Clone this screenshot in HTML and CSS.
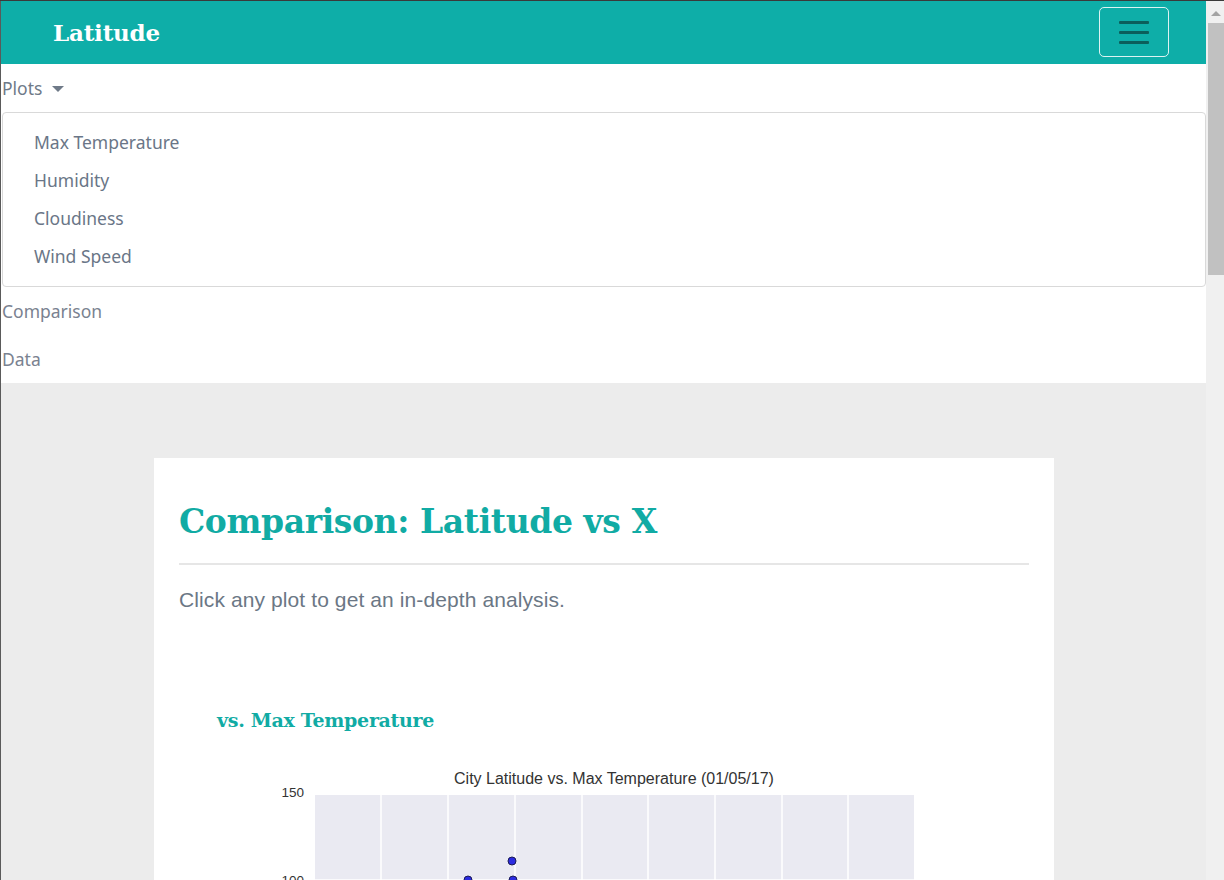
FILE: index.html
```html
<!DOCTYPE html>
<html lang="en">
<head>
<meta charset="utf-8">
<title>Latitude - Comparison</title>
<link rel="stylesheet" href="styles.css">
</head>
<body>
<div class="window">
  <div class="page">
    <nav class="navbar">
      <a class="brand" href="#">Latitude</a>
      <button class="toggler" type="button" aria-label="Toggle navigation">
        <span class="bar"></span><span class="bar"></span><span class="bar"></span>
      </button>
    </nav>
    <div class="menu">
      <div class="menu-row dropdown-toggle">Plots <span class="caret"></span></div>
      <div class="dropdown">
        <a class="dropdown-item" href="#">Max Temperature</a>
        <a class="dropdown-item" href="#">Humidity</a>
        <a class="dropdown-item" href="#">Cloudiness</a>
        <a class="dropdown-item" href="#">Wind Speed</a>
      </div>
      <div class="menu-row">Comparison</div>
      <div class="menu-row">Data</div>
    </div>
    <main class="content">
      <section class="card">
        <h1 class="title">Comparison: Latitude vs X</h1>
        <hr class="rule">
        <p class="lead">Click any plot to get an in-depth analysis.</p>
        <div class="plot">
          <h3 class="plot-title">vs. Max Temperature</h3>
          <svg class="chart" width="700" height="260" viewBox="0 0 700 260">
            <text x="354" y="19" class="ctitle" text-anchor="middle">City Latitude vs. Max Temperature (01/05/17)</text>
            <rect x="55" y="30" width="599" height="230" fill="#eaeaf2"/>
            <g stroke="#ffffff" stroke-width="1.5">
              <line x1="121" y1="30" x2="121" y2="260"/>
              <line x1="188" y1="30" x2="188" y2="260"/>
              <line x1="255" y1="30" x2="255" y2="260"/>
              <line x1="322" y1="30" x2="322" y2="260"/>
              <line x1="388" y1="30" x2="388" y2="260"/>
              <line x1="455" y1="30" x2="455" y2="260"/>
              <line x1="522" y1="30" x2="522" y2="260"/>
              <line x1="588" y1="30" x2="588" y2="260"/>
              <line x1="55" y1="115" x2="654" y2="115"/>
            </g>
            <text x="44" y="32" class="ctick" text-anchor="end">150</text>
            <text x="44" y="120" class="ctick" text-anchor="end">100</text>
            <g fill="#2b2be0" stroke="#1b1b55" stroke-width="1">
              <circle cx="252" cy="96" r="4"/>
              <circle cx="208" cy="115" r="4"/>
              <circle cx="253" cy="115" r="4"/>
              <circle cx="230" cy="128" r="4"/>
            </g>
          </svg>
        </div>
      </section>
    </main>
  </div>
  <div class="scrollbar">
    <span class="arrow"></span>
    <span class="thumb"></span>
  </div>
</div>
</body>
</html>
```

FILE: styles.css
```css
* { box-sizing: border-box; }
html, body { margin: 0; padding: 0; height: 100%; overflow: hidden; }
body {
  font-family: "Noto Sans", "Open Sans", sans-serif;
  background: #ececec;
}
.window {
  display: flex;
  height: 880px;
  border-top: 1px solid #3a3a3a;
}
.page {
  flex: 1;
  min-width: 0;
  border-left: 1px solid #5a5a5a;
  overflow: hidden;
  background: #ececec;
}
.navbar {
  height: 63px;
  background: #0eaea8;
  display: flex;
  align-items: center;
  justify-content: space-between;
  padding: 0 37px 0 52px;
}
.brand {
  font-family: "DejaVu Serif", "Liberation Serif", serif;
  font-weight: bold;
  font-size: 23px;
  color: #ffffff;
  text-decoration: none;
  letter-spacing: -0.2px;
  margin-top: 0;
}
.toggler {
  width: 70px;
  height: 50px;
  margin-top: -1px;
  border: 1px solid rgba(255,255,255,0.85);
  border-radius: 5px;
  background: transparent;
  display: flex;
  flex-direction: column;
  align-items: center;
  justify-content: center;
  gap: 7px;
  padding: 0;
}
.bar {
  display: block;
  width: 30px;
  height: 3px;
  background: #0b5f5b;
  border-radius: 1px;
}
.menu {
  background: #ffffff;
  padding: 0 0 0 1px;
}
.menu-row {
  height: 48px;
  line-height: 48px;
  font-size: 17.5px;
  color: #7a8290;
}
.dropdown-toggle { color: #6f7a88; }
.caret {
  display: inline-block;
  width: 0; height: 0;
  border-left: 6px solid transparent;
  border-right: 6px solid transparent;
  border-top: 6px solid #6f7a88;
  vertical-align: middle;
  margin-left: 5px;
  margin-top: -3px;
}
.dropdown {
  border: 1px solid #d9d9d9;
  border-radius: 4px;
  padding: 10px 0 11px;
  display: flex;
  flex-direction: column;
}
.dropdown-item {
  display: block;
  height: 38px;
  line-height: 38px;
  padding-left: 31px;
  font-size: 17.5px;
  color: #6a7687;
  text-decoration: none;
}
.content {
  padding: 75px 0 0 153px;
}
.card {
  width: 900px;
  background: #ffffff;
  padding: 40px 25px 0 25px;
  height: 600px;
}
.title {
  font-family: "DejaVu Serif", "Liberation Serif", serif;
  font-weight: bold;
  font-size: 33px;
  color: #11aba4;
  margin: 0;
  line-height: 48px;
  letter-spacing: -0.4px;
}
.rule {
  border: 0;
  border-top: 2px solid #e6e6e6;
  margin: 17px 0 0 0;
}
.lead {
  font-family: "Liberation Sans", Arial, sans-serif;
  font-size: 21px;
  letter-spacing: 0.1px;
  color: #6b7785;
  margin: 23px 0 0 0;
  line-height: 24px;
}
.plot {
  padding-left: 38px;
  margin-top: 96px;
}
.plot-title {
  font-family: "DejaVu Serif", "Liberation Serif", serif;
  font-weight: bold;
  font-size: 19px;
  color: #11aba4;
  margin: 0;
  line-height: 24px;
  letter-spacing: -0.3px;
}
.chart {
  display: block;
  margin: 33px 0 0 43px;
}
.ctitle {
  font-family: "Liberation Sans", Arial, sans-serif;
  font-size: 16px;
  fill: #333333;
}
.ctick {
  font-family: "Liberation Sans", Arial, sans-serif;
  font-size: 13.5px;
  fill: #333333;
}
.scrollbar {
  width: 18px;
  flex: 0 0 18px;
  background: #f0f0f0;
  display: flex;
  flex-direction: column;
  align-items: flex-end;
}
.arrow {
  display: block;
  width: 0; height: 0;
  border-left: 5px solid transparent;
  border-right: 5px solid transparent;
  border-bottom: 5px solid #a3a3a3;
  margin: 10px 3px 7px 0;
}
.thumb {
  display: block;
  width: 16px;
  height: 252px;
  background: #c1c1c1;
}
```
